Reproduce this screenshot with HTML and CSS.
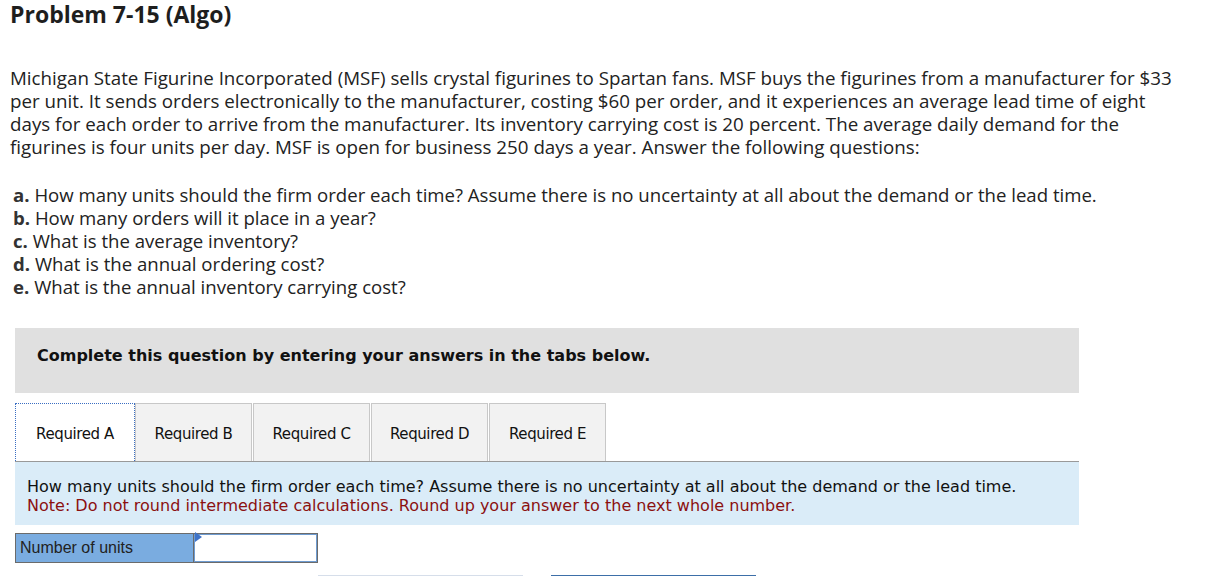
FILE: index.html
```html
<!DOCTYPE html>
<html>
<head>
<meta charset="utf-8">
<link rel="stylesheet" href="styles.css">
</head>
<body>
<div class="page">
  <h1 class="title">Problem 7-15 (Algo)</h1>
  <p class="intro">Michigan State Figurine Incorporated (MSF) sells crystal figurines to Spartan fans. MSF buys the figurines from a manufacturer for $33 per unit. It sends orders electronically to the manufacturer, costing $60 per order, and it experiences an average lead time of eight days for each order to arrive from the manufacturer. Its inventory carrying cost is 20 percent. The average daily demand for the figurines is four units per day. MSF is open for business 250 days a year. Answer the following questions:</p>
  <ul class="questions">
    <li><b>a.</b> How many units should the firm order each time? Assume there is no uncertainty at all about the demand or the lead time.</li>
    <li><b>b.</b> How many orders will it place in a year?</li>
    <li><b>c.</b> What is the average inventory?</li>
    <li><b>d.</b> What is the annual ordering cost?</li>
    <li><b>e.</b> What is the annual inventory carrying cost?</li>
  </ul>
  <div class="work">
    <div class="banner">Complete this question by entering your answers in the tabs below.</div>
    <div class="tabs">
      <div class="tab active">Required A</div>
      <div class="tab">Required B</div>
      <div class="tab">Required C</div>
      <div class="tab">Required D</div>
      <div class="tab">Required E</div>
    </div>
    <div class="panel">
      <div>How many units should the firm order each time? Assume there is no uncertainty at all about the demand or the lead time.</div>
      <div class="note">Note: Do not round intermediate calculations. Round up your answer to the next whole number.</div>
    </div>
    <div class="answer">
      <div class="label">Number of units</div>
      <div class="input"><span class="flag"></span></div>
    </div>
    <div class="buttons">
      <div class="btn prev"></div>
      <div class="btn next"></div>
    </div>
  </div>
</div>
</body>
</html>
```

FILE: styles.css
```css
html, body {
  margin: 0;
  padding: 0;
  background: #fff;
  overflow: hidden;
}
.page {
  padding-left: 10px;
  color: #222;
  font-family: "Open Sans", "Noto Sans", sans-serif;
  font-variant-ligatures: none;
}
.title {
  margin: 0;
  padding-top: 1px;
  font-size: 23px;
  line-height: 26px;
  font-weight: 700;
  color: #1e1e1e;
}
.intro {
  margin: 39px 0 0 0;
  font-size: 18.75px;
  line-height: 23px;
  color: #222;
  width: 1165px;
}
.questions {
  list-style: none;
  margin: 25px 0 0 0;
  padding: 0 0 0 3px;
  font-size: 18.6px;
  line-height: 23px;
  color: #222;
}
.questions b {
  color: #333;
}
.work {
  margin-top: 30px;
  margin-left: 5px;
  width: 1064px;
}
.banner {
  background: #e0e0e0;
  height: 65px;
  box-sizing: border-box;
  padding: 17px 0 0 22px;
  font-family: "DejaVu Sans", Verdana, sans-serif;
  font-weight: 700;
  font-size: 16px;
  line-height: 22px;
  color: #111;
}
.tabs {
  display: flex;
  gap: 1px;
  margin-top: 10px;
  height: 58px;
}
.tab {
  box-sizing: border-box;
  height: 58px;
  width: 117px;
  background: #f2f2f2;
  border: 1px solid #c8c8c8;
  border-bottom: none;
  display: flex;
  align-items: center;
  justify-content: center;
  font-family: "DejaVu Sans", Tahoma, sans-serif;
  font-size: 15px;
  letter-spacing: -0.4px;
  color: #111;
  padding-top: 3px;
}
.tab.active {
  width: 120px;
  background: #fff;
  border: 1px dotted #3a6ec2;
  border-bottom: none;
  margin-right: -1px;
}
.panel {
  background: #daecf8;
  border-top: 1px solid #999;
  height: 64px;
  box-sizing: border-box;
  padding: 15px 0 0 12px;
  font-family: "DejaVu Sans", Verdana, sans-serif;
  font-size: 16px;
  line-height: 19px;
  color: #111;
}
.note {
  color: #8b1010;
}
.answer {
  display: flex;
  margin-top: 8px;
  height: 30px;
}
.label {
  box-sizing: border-box;
  width: 178px;
  height: 30px;
  background: #7aace0;
  border: 1px solid #6b6b6b;
  border-right: none;
  font-family: "Liberation Sans", Arial, sans-serif;
  font-size: 16px;
  line-height: 28px;
  padding-left: 4px;
  color: #222;
}
.input {
  position: relative;
  box-sizing: border-box;
  width: 125px;
  height: 30px;
  background: #fff;
  border: 2px solid #6e9bd0;
  outline: 1px solid #6b6b6b;
  outline-offset: -1px;
}
.flag {
  position: absolute;
  left: 0;
  top: 0;
  width: 0;
  height: 0;
  border-top: 5px solid transparent;
  border-bottom: 5px solid transparent;
  border-left: 7px solid #3f73c8;
  transform: translateY(-3px);
}
.buttons {
  display: flex;
  gap: 28px;
  margin-top: 12px;
  margin-left: 303px;
}
.btn {
  width: 205px;
  height: 30px;
  box-sizing: border-box;
}
.btn.prev {
  border-top: 2px solid #d6deea;
}
.btn.next {
  border-top: 2px solid #3d6fa8;
}
```
